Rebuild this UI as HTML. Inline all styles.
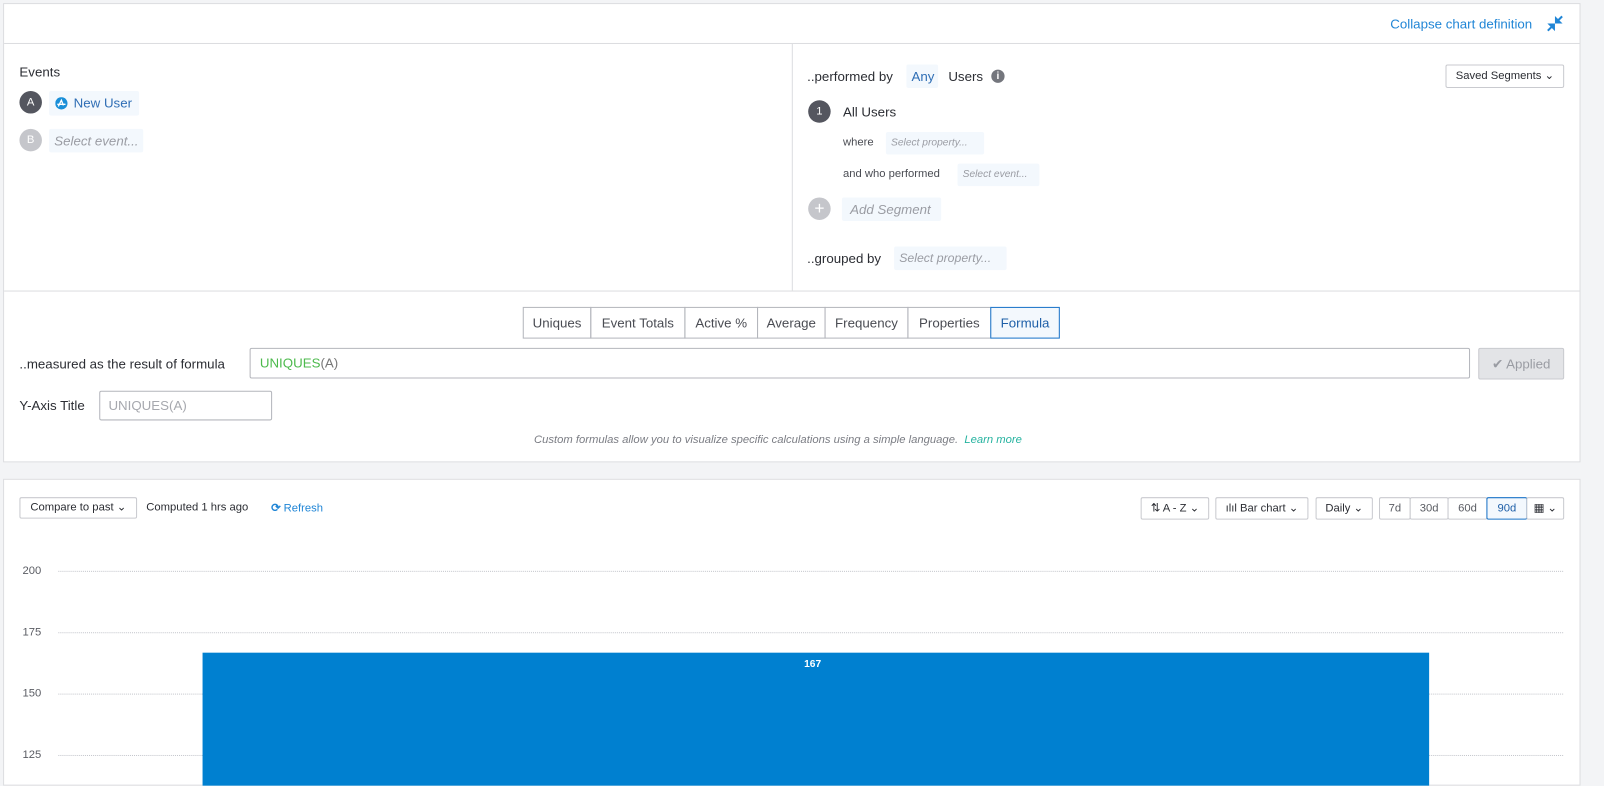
<!DOCTYPE html>
<html><head><meta charset="utf-8"><style>
*{box-sizing:border-box;margin:0;padding:0}
body{width:1604px;height:763px;background:#f3f4f6;font-family:"Liberation Sans",sans-serif;color:#2b2d33;position:relative;overflow:hidden;font-size:13px}
#w{position:absolute;left:0;top:0;width:1568px;height:746px;transform:scale(1.023);transform-origin:0 0}
.a{position:absolute;white-space:nowrap}
.p{position:absolute;background:#fff;border:1px solid #dcdde0}
.c{position:absolute;border-radius:50%;color:#fff;font-size:11px;text-align:center;line-height:22px;width:22px;height:22px}
.chip{position:absolute;background:#f3f8fd;border-radius:2px;color:#9a9ca3;font-style:italic;padding:0 5px;white-space:nowrap;overflow:hidden}
.btn{position:absolute;border:1px solid #c9cacf;border-radius:2px;background:#fff;font-size:11px;color:#2b2d33;text-align:center;white-space:nowrap}
.tab{position:absolute;top:300px;height:31px;border:1px solid #b4b6bc;line-height:29px;text-align:center;color:#4a4c53;font-size:13px;white-space:nowrap}
.g{position:absolute;left:57px;width:1471px;border-top:1px dotted #c4c6cc}
.yl{position:absolute;left:22px;font-size:11px;color:#5a5c63}
</style></head><body><div id="w">
<div class="p" style="left:3px;top:3px;width:1542px;height:449px"></div>
<div class="a" style="left:4px;top:42px;width:1540px;border-top:1px solid #dcdde0"></div>
<div class="a" style="left:1359px;top:16px;color:#2186d6;font-size:13px">Collapse chart definition</div>
<svg class="a" style="left:1512px;top:15px" width="16" height="16" viewBox="0 0 16 16"><path d="M1 15L6 10M3 9h4v4z M15 1L10 6M13 7H9V3z" stroke="#2186d6" stroke-width="2" fill="#2186d6"/></svg>
<div class="a" style="left:774px;top:43px;height:241px;border-left:1px solid #dcdde0"></div>
<div class="a" style="left:4px;top:284px;width:1540px;border-top:1px solid #dcdde0"></div>

<div class="a" style="left:19px;top:63px">Events</div>
<div class="c" style="left:19px;top:89px;background:#54565f">A</div>
<div class="chip" style="left:48px;top:89px;height:24px;width:88px;font-style:normal;color:#2f6eb5;line-height:24px;padding-left:24px">New User</div>
<svg class="a" style="left:54px;top:95px" width="12" height="12" viewBox="0 0 12 12"><circle cx="6" cy="6" r="6" fill="#1a8fd8"/><path d="M3 9L6 3L8 8M2 7h8" stroke="#fff" stroke-width="1.3" fill="none"/></svg>
<div class="c" style="left:19px;top:126px;background:#c5c6cb">B</div>
<div class="chip" style="left:48px;top:126px;height:23px;width:92px;line-height:23px">Select event...</div>

<div class="a" style="left:789px;top:67px">..performed by</div>
<div class="chip" style="left:886px;top:63px;height:23px;width:31px;font-style:normal;color:#2f6eb5;line-height:23px">Any</div>
<div class="a" style="left:927px;top:67px">Users</div>
<div class="c" style="left:969px;top:68px;width:13px;height:13px;background:#74767d;font-size:10px;line-height:13px;font-weight:bold">i</div>
<div class="btn" style="left:1413px;top:63px;width:116px;height:23px;line-height:21px">Saved Segments ⌄</div>
<div class="c" style="left:790px;top:98px;background:#54565f">1</div>
<div class="a" style="left:824px;top:102px">All Users</div>
<div class="a" style="left:824px;top:133px;font-size:11px;color:#4a4c53">where</div>
<div class="chip" style="left:866px;top:129px;height:22px;width:96px;line-height:22px;font-size:10px">Select property...</div>
<div class="a" style="left:824px;top:164px;font-size:11px;color:#4a4c53">and who performed</div>
<div class="chip" style="left:936px;top:160px;height:22px;width:80px;line-height:22px;font-size:10px">Select event...</div>
<div class="c" style="left:790px;top:193px;background:#c5c6cb;font-size:17px;line-height:21px">+</div>
<div class="chip" style="left:823px;top:193px;height:23px;width:97px;line-height:23px;padding-left:8px">Add Segment</div>
<div class="a" style="left:789px;top:245px">..grouped by</div>
<div class="chip" style="left:874px;top:241px;height:23px;width:110px;line-height:23px;font-size:12px">Select property...</div>

<div class="tab" style="left:511px;width:67px">Uniques</div>
<div class="tab" style="left:577px;width:93px">Event Totals</div>
<div class="tab" style="left:669px;width:72px">Active %</div>
<div class="tab" style="left:740px;width:67px">Average</div>
<div class="tab" style="left:806px;width:82px">Frequency</div>
<div class="tab" style="left:887px;width:82px">Properties</div>
<div class="tab" style="left:968px;width:68px;border-color:#1a73c8;background:#f3f8fd;color:#1e5fa8">Formula</div>

<div class="a" style="left:19px;top:348px">..measured as the result of formula</div>
<div class="a" style="left:244px;top:340px;width:1193px;height:30px;border:1px solid #b4b6bc;border-radius:2px;padding-left:9px;line-height:28px"><span style="color:#4cba4c">UNIQUES</span><span style="color:#777">(A)</span></div>
<div class="a" style="left:1445px;top:340px;width:84px;height:31px;background:#e3e4e7;border:1px solid #c9cacf;border-radius:2px;color:#9a9ca3;line-height:29px;text-align:center">✔ Applied</div>
<div class="a" style="left:19px;top:389px">Y-Axis Title</div>
<div class="a" style="left:97px;top:382px;width:169px;height:29px;border:1px solid #b4b6bc;border-radius:2px;padding-left:8px;line-height:27px;color:#a6a8ae">UNIQUES(A)</div>
<div class="a" style="left:522px;top:424px;font-size:11px;font-style:italic;color:#7a7c83">Custom formulas allow you to visualize specific calculations using a simple language.&nbsp; <span style="color:#26b3a0">Learn more</span></div>

<div class="p" style="left:3px;top:468px;width:1542px;height:300px"></div>
<div class="btn" style="left:19px;top:486px;width:115px;height:21px;line-height:19px">Compare to past ⌄</div>
<div class="a" style="left:143px;top:490px;font-size:11px">Computed 1 hrs ago</div>
<div class="a" style="left:265px;top:490px;font-size:11px;color:#2186d6"><b>⟳</b> Refresh</div>
<div class="btn" style="left:1115px;top:486px;width:67px;height:22px;line-height:20px">⇅ A - Z ⌄</div>
<div class="btn" style="left:1188px;top:486px;width:91px;height:22px;line-height:20px">ılıl Bar chart ⌄</div>
<div class="btn" style="left:1286px;top:486px;width:56px;height:22px;line-height:20px">Daily ⌄</div>
<div class="btn" style="left:1348px;top:486px;width:31px;height:22px;line-height:20px;color:#5a5c63">7d</div>
<div class="btn" style="left:1378px;top:486px;width:38px;height:22px;line-height:20px;color:#5a5c63">30d</div>
<div class="btn" style="left:1415px;top:486px;width:39px;height:22px;line-height:20px;color:#5a5c63">60d</div>
<div class="btn" style="left:1453px;top:486px;width:40px;height:22px;line-height:20px;color:#1e5fa8;border-color:#1a73c8;background:#f3f8fd">90d</div>
<div class="btn" style="left:1492px;top:486px;width:37px;height:22px;line-height:20px">▦ ⌄</div>

<div class="g" style="top:558px"></div><div class="yl" style="top:552px">200</div>
<div class="g" style="top:618px"></div><div class="yl" style="top:612px">175</div>
<div class="g" style="top:678px"></div><div class="yl" style="top:672px">150</div>
<div class="g" style="top:738px"></div><div class="yl" style="top:732px">125</div>
<div class="a" style="left:198px;top:638px;width:1199px;height:130px;background:#0080d0"></div>
<div class="a" style="left:786px;top:644px;color:#fff;font-weight:bold;font-size:10px">167</div>
</div></body></html>
